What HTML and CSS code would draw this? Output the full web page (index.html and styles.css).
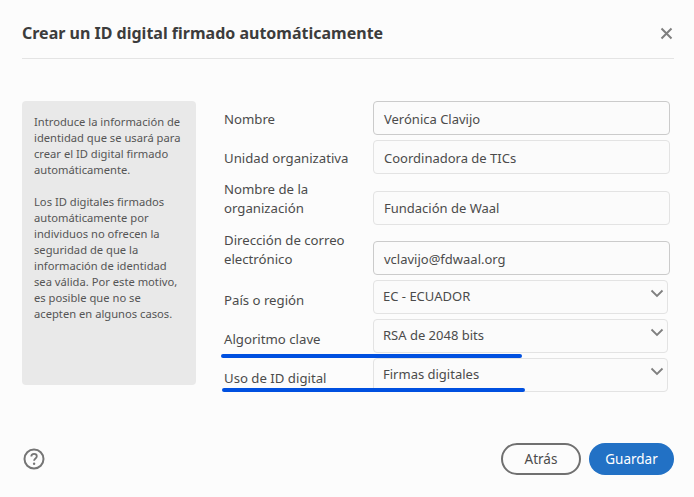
FILE: index.html
```html
<!DOCTYPE html>
<html lang="es">
<head>
<meta charset="utf-8">
<title>Crear un ID digital firmado automáticamente</title>
<link rel="stylesheet" href="styles.css">
</head>
<body>
<div class="dialog">
  <header class="head">
    <h1 class="title">Crear un ID digital firmado automáticamente</h1>
    <svg class="close" width="13" height="13" viewBox="0 0 13 13"><path d="M1.5 1.5l10 10M11.5 1.5l-10 10" stroke="#7f7f7f" stroke-width="2" fill="none"/></svg>
  </header>
  <main class="body">
    <aside class="info">
      <p>Introduce la información de identidad que se usará para crear el ID digital firmado automáticamente.</p>
      <p>Los ID digitales firmados automáticamente por individuos no ofrecen la seguridad de que la información de identidad sea válida. Por este motivo, es posible que no se acepten en algunos casos.</p>
    </aside>
    <div class="form">
      <div class="label">Nombre</div>
      <div class="field dark">Verónica Clavijo</div>
      <div class="label">Unidad organizativa</div>
      <div class="field">Coordinadora de TICs</div>
      <div class="label two-org">Nombre de la<br>organización</div>
      <div class="field mid">Fundación de Waal</div>
      <div class="label two-mail">Dirección de correo<br>electrónico</div>
      <div class="field dark">vclavijo@fdwaal.org</div>
      <div class="label low">País o región</div>
      <div class="field select">EC - ECUADOR<svg class="chev" width="14" height="9" viewBox="0 0 14 9"><path d="M1.5 1.5L7 7l5.500-5.500" stroke="#7f7f7f" stroke-width="1.800" fill="none"/></svg></div>
      <div class="label low">Algoritmo clave</div>
      <div class="field select">RSA de 2048 bits<svg class="chev" width="14" height="9" viewBox="0 0 14 9"><path d="M1.5 1.5L7 7l5.500-5.500" stroke="#7f7f7f" stroke-width="1.800" fill="none"/></svg></div>
      <div class="label low">Uso de ID digital</div>
      <div class="field select">Firmas digitales<svg class="chev" width="14" height="9" viewBox="0 0 14 9"><path d="M1.5 1.5L7 7l5.500-5.500" stroke="#7f7f7f" stroke-width="1.800" fill="none"/></svg></div>
    </div>
  </main>
  <footer class="foot">
    <svg class="help" width="22" height="22" viewBox="0 0 22 22"><circle cx="11" cy="11" r="9.500" stroke="#757575" stroke-width="2" fill="none"/><path d="M8.300 8.600c0-1.700 1.200-2.700 2.800-2.700s2.700 1 2.700 2.400c0 2.200-2.700 2.200-2.700 4.400" stroke="#757575" stroke-width="1.800" fill="none"/><circle cx="11.100" cy="15.700" r="1.200" fill="#757575"/></svg>
    <div class="actions">
      <button class="btn back">Atrás</button>
      <button class="btn save">Guardar</button>
    </div>
  </footer>
  <div class="mark one"></div>
  <div class="mark two"></div>
</div>
</body>
</html>
```
FILE: styles.css
```css
* { box-sizing: border-box; }
html, body { margin: 0; height: 100%; }
body {
  background: #fcfcfc;
  font-family: "Noto Sans", "Open Sans", sans-serif;
  color: #4b4b4b;
  overflow: hidden;
}
.dialog {
  position: relative;
  width: 694px;
  height: 497px;
  padding: 0 20px 0 22px;
}
.head {
  height: 59px;
  border-bottom: 1px solid #e4e4e4;
  display: flex;
  align-items: center;
  justify-content: space-between;
  padding: 8px 1px 0 0;
}
.title {
  margin: 0;
  font-size: 16px;
  font-weight: 700;
  color: #3c3c3c;
  white-space: nowrap;
}
.body {
  display: flex;
  gap: 28px;
  margin-top: 42px;
}
.info {
  width: 174px;
  height: 284px;
  background: #e9e9e9;
  border-radius: 4px;
  padding: 13px 12px;
  font-size: 11.200px;
  line-height: 16px;
  color: #555;
}
.info p { margin: 0 0 16px; }
.form {
  display: grid;
  grid-template-columns: 149px 297px;
  grid-template-rows: 34px 34px 46px 45px 34px 34px 34px;
  row-gap: 5px;
}
.label {
  align-self: end;
  padding-bottom: 6px;
  font-size: 13.200px;
  line-height: 20px;
  color: #4b4b4b;
}
.label.two-org { line-height: 19px; padding-bottom: 7px; }
.label.two-mail { line-height: 19px; padding-bottom: 6px; }
.label.low { padding-bottom: 4px; }
.field {
  position: relative;
  align-self: end;
  height: 34px;
  border: 1px solid #e3e3e3;
  border-radius: 4px;
  background: #fbfbfb;
  padding-left: 10px;
  font-size: 13px;
  line-height: 34px;
  color: #4b4b4b;
}
.field.mid { line-height: 32px; }
.field.dark { border-color: #cbcbcb; }
.field.select { width: 295px; padding-left: 9px; line-height: 30px; }
.chev { position: absolute; right: 3px; top: 8px; }
.foot {
  display: flex;
  align-items: center;
  justify-content: space-between;
  margin-top: 51px;
}
.help { margin-left: 1px; }
.actions { display: flex; gap: 8px; }
.btn {
  height: 32px;
  border-radius: 16px;
  font-family: inherit;
  font-size: 13.500px;
  padding: 0;
}
.back {
  width: 80px;
  background: transparent;
  border: 2px solid #707070;
  color: #4b4b4b;
}
.save {
  width: 85px;
  background: #2271c5;
  border: 0;
  color: #fff;
}
.mark {
  position: absolute;
  height: 4px;
  background: #0050e0;
  border-radius: 2px;
}
.mark.one { left: 221px; top: 354px; width: 301px; }
.mark.two { left: 222px; top: 388px; width: 303px; }
```
